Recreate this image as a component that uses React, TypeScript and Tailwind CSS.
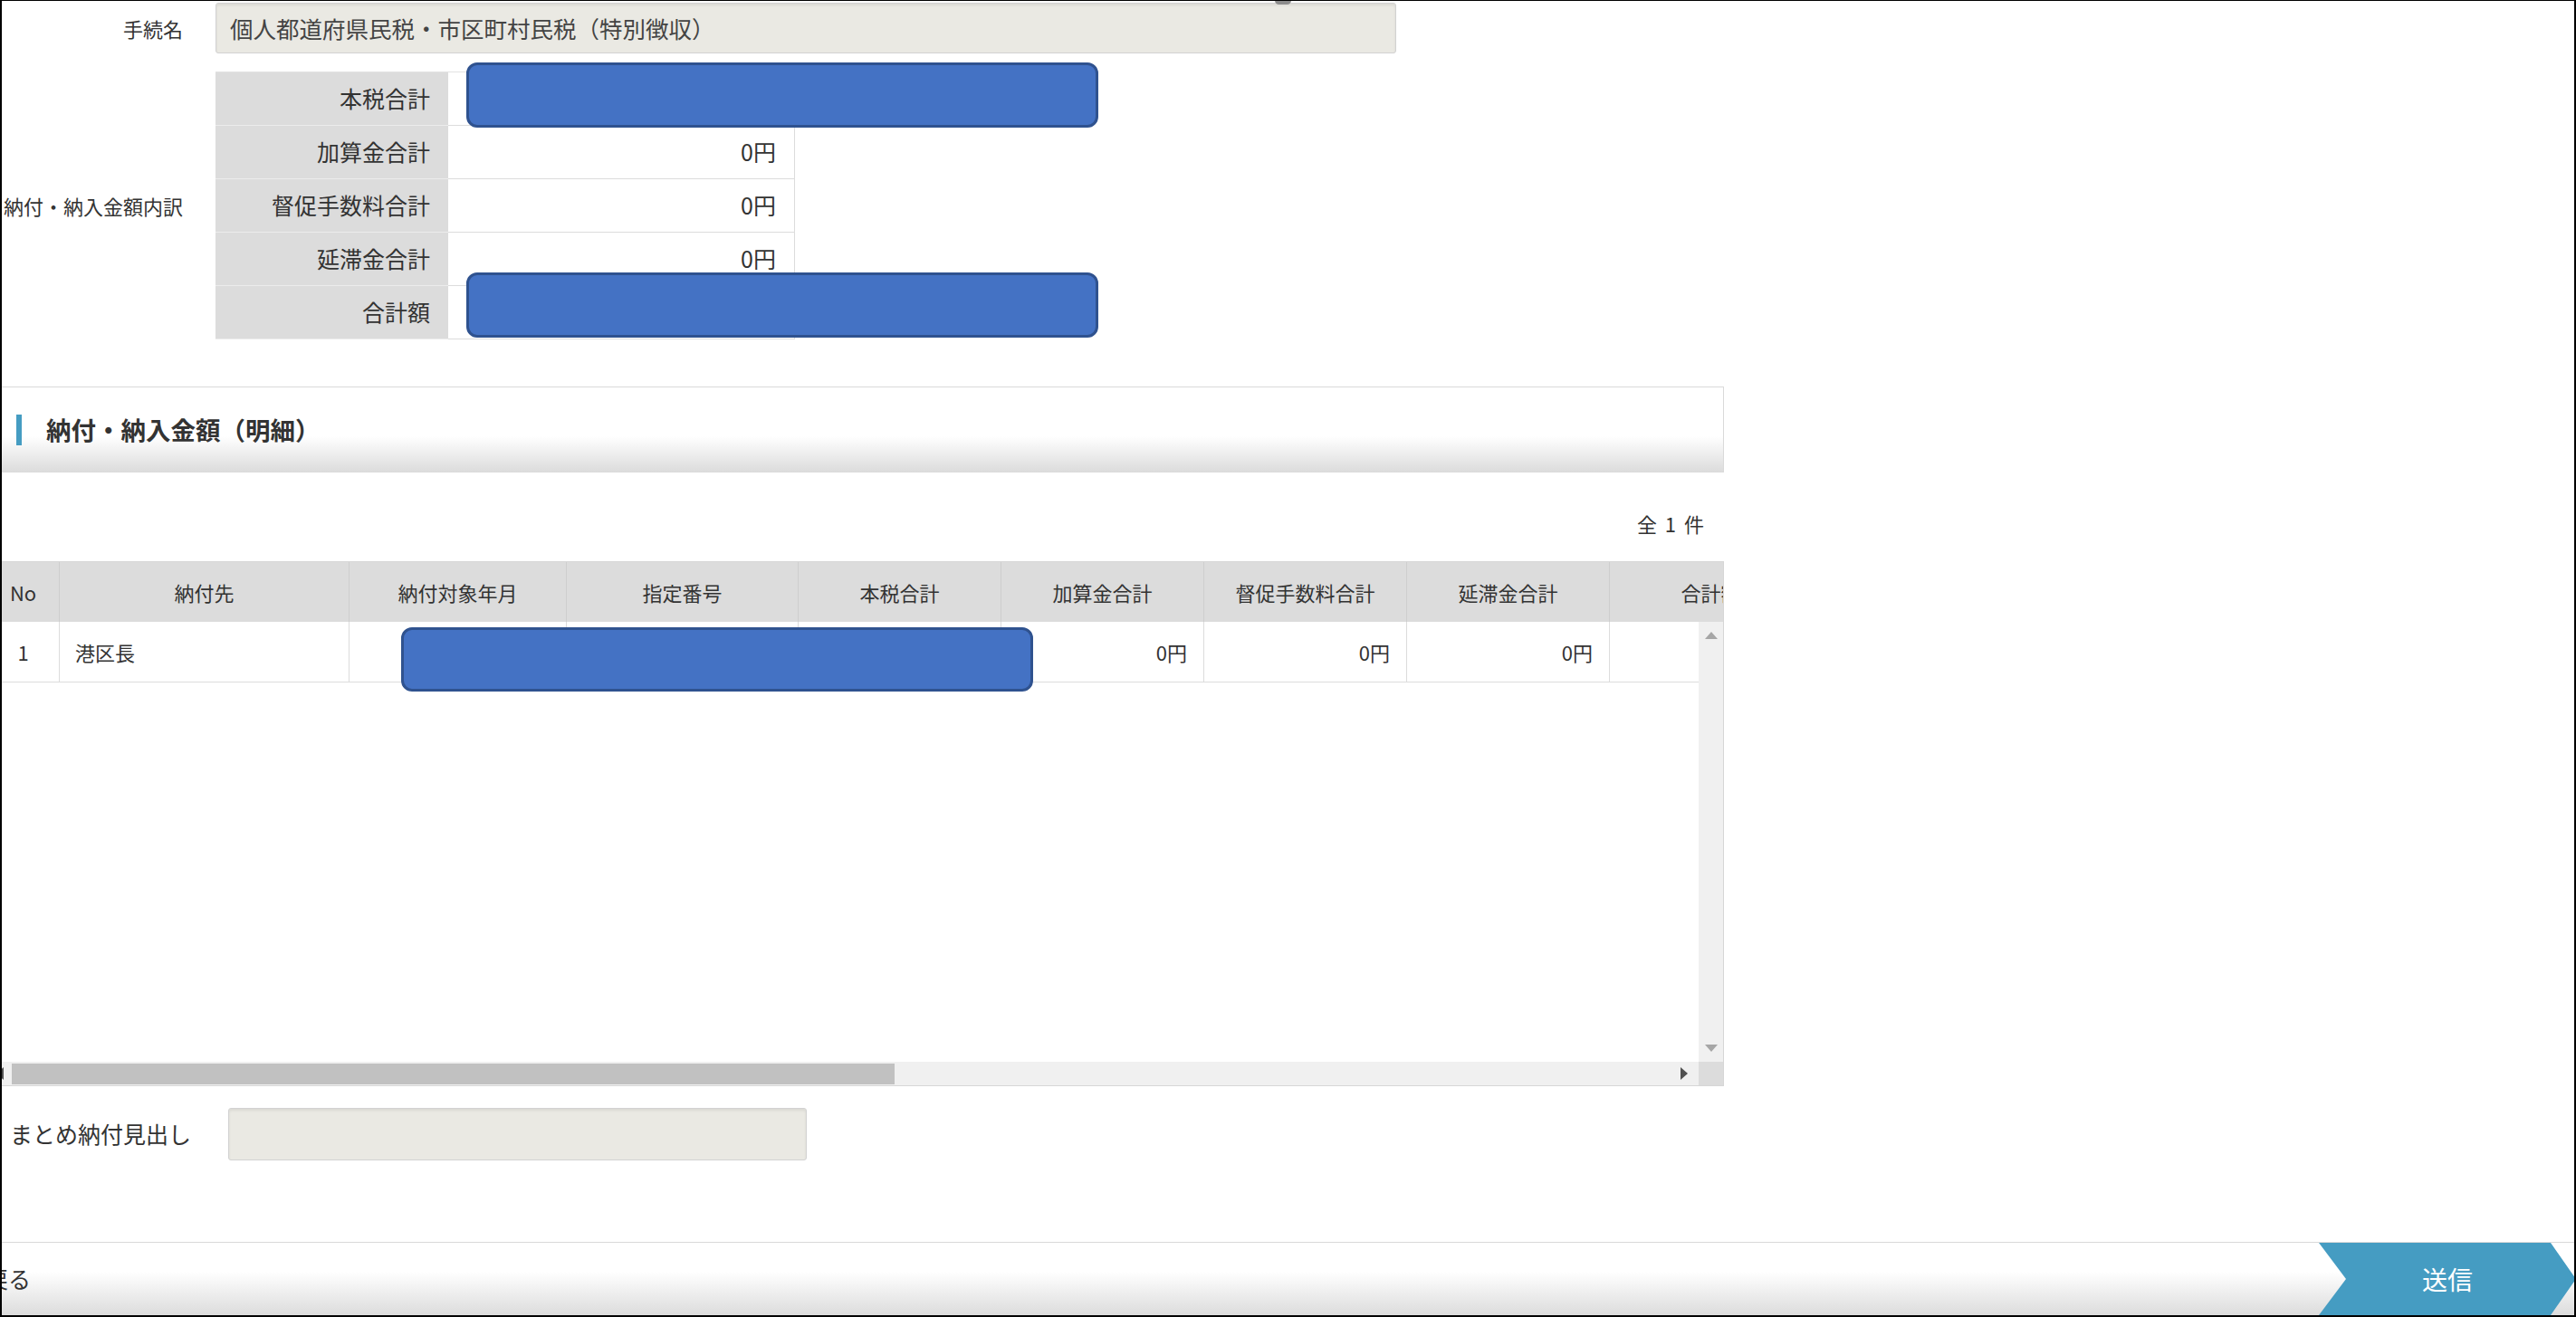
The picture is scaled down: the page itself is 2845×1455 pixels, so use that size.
import React from "react";

const FONT = "font-['Noto_Sans_CJK_JP','Noto_Sans',sans-serif]";

// summary rows of the breakdown table
const breakdown = [
  { label: "本税合計", value: "" },
  { label: "加算金合計", value: "0円" },
  { label: "督促手数料合計", value: "0円" },
  { label: "延滞金合計", value: "0円" },
  { label: "合計額", value: "" },
];

type Col = { label: string; w: string; align: string; value: string };

const columns: Col[] = [
  { label: "No", w: "w-[80px]", align: "justify-center", value: "1" },
  { label: "納付先", w: "w-[320px]", align: "justify-start pl-[17px]", value: "港区長" },
  { label: "納付対象年月", w: "w-[240px]", align: "justify-end pr-[18px]", value: "" },
  { label: "指定番号", w: "w-[256px]", align: "justify-end pr-[18px]", value: "" },
  { label: "本税合計", w: "w-[224px]", align: "justify-end pr-[18px]", value: "" },
  { label: "加算金合計", w: "w-[224px]", align: "justify-end pr-[18px]", value: "0円" },
  { label: "督促手数料合計", w: "w-[224px]", align: "justify-end pr-[18px]", value: "0円" },
  { label: "延滞金合計", w: "w-[224px]", align: "justify-end pr-[18px]", value: "0円" },
  { label: "合計額", w: "w-[224px]", align: "justify-end pr-[18px]", value: "" },
];

function Masked({ className }: { className: string }) {
  return (
    <div
      className={`absolute bg-[#4472c4] border-[3px] border-[#2f528f] rounded-[12px] ${className}`}
    />
  );
}

function Arrow({ dir }: { dir: "up" | "down" | "left" | "right" }) {
  if (dir === "up")
    return (
      <svg width="14" height="8" viewBox="0 0 14 8">
        <polygon points="0,8 14,8 7,0" fill="#a6a6a6" />
      </svg>
    );
  if (dir === "down")
    return (
      <svg width="14" height="8" viewBox="0 0 14 8">
        <polygon points="0,0 14,0 7,8" fill="#a6a6a6" />
      </svg>
    );
  if (dir === "left")
    return (
      <svg width="8" height="14" viewBox="0 0 8 14">
        <polygon points="8,0 8,14 0,7" fill="#505050" />
      </svg>
    );
  return (
    <svg width="8" height="14" viewBox="0 0 8 14">
      <polygon points="0,0 0,14 8,7" fill="#505050" />
    </svg>
  );
}

export default function App() {
  return (
    <div
      className={`relative w-[2845px] h-[1455px] overflow-hidden bg-white border-t border-x-2 border-b-2 border-black text-[#333] ${FONT}`}
    >
      <div className="absolute left-[1406px] top-[-5px] w-[18px] h-[9px] rounded-full bg-[#8c8c8c]" />

      <div className="flex flex-col h-full">
        {/* 手続名 */}
        <div className="flex items-center mt-[2px]">
          <div className="w-[200px] text-right text-[22px]">手続名</div>
          <div className="ml-[36px] w-[1304px] h-[56px] flex items-center pl-[15px] bg-[#eae9e3] border border-[#d2d2d2] rounded-[3px] shadow-[inset_0_2px_3px_rgba(0,0,0,0.07)] text-[25.5px] text-[#444]">
            個人都道府県民税・市区町村民税（特別徴収）
          </div>
        </div>

        {/* 内訳テーブル */}
        <div className="flex items-center mt-[20px]">
          <div className="w-[200px] text-right text-[22px] whitespace-nowrap">納付・納入金額内訳</div>
          <div className="ml-[36px] relative w-[640px] border-t border-[#e2e2e2]">
            {breakdown.map((r) => (
              <div key={r.label} className="flex h-[59px] text-[25px]">
                <div className="w-[257px] flex items-center justify-end pr-[20px] bg-[#dcdcdc] border-b border-[#ececec]">
                  {r.label}
                </div>
                <div className="w-[383px] flex items-center justify-end pr-[20px] border-b border-r border-[#dcdcdc]">
                  {r.value}
                </div>
              </div>
            ))}
            <Masked className="left-[277px] top-[-11px] w-[698px] h-[72px]" />
            <Masked className="left-[277px] top-[221px] w-[698px] h-[72px]" />
          </div>
        </div>

        {/* 見出し */}
        <div className="mt-[52px] w-[1902px] h-[95px] flex items-center pl-[16px] border-y border-r border-[#dadada] bg-[linear-gradient(to_bottom,#ffffff_58%,#dcdcdc_100%)]">
          <div className="w-[6px] h-[34px] bg-[#459cc2]" />
          <div className="ml-[27px] text-[27.5px] font-bold">納付・納入金額（明細）</div>
        </div>

        <div className="w-[1902px] h-[98px] flex justify-end pr-[20px] pt-[41px]">
          <div className="text-[22px] leading-[30px] h-[30px] tracking-[2px]">全 1 件</div>
        </div>

        {/* 明細グリッド */}
        <div className="relative -ml-[16px] w-[1918px] h-[580px] flex flex-col border-r border-b border-[#d6d6d6]">
          <div className="flex h-[67px] shrink-0 overflow-hidden bg-[#dcdcdc] border-t border-[#d6d6d6]">
            {columns.map((c) => (
              <div
                key={c.label}
                className={`${c.w} shrink-0 flex items-center justify-center border-r border-[#cecece] text-[22px] whitespace-nowrap`}
              >
                {c.label}
              </div>
            ))}
          </div>

          <div className="flex h-[486px] shrink-0">
            <div className="flex-1 overflow-hidden bg-white">
              <div className="flex h-[67px] border-b border-[#dcdcdc]">
                {columns.map((c) => (
                  <div
                    key={c.label}
                    className={`${c.w} ${c.align} shrink-0 flex items-center border-r border-[#dcdcdc] text-[22px] whitespace-nowrap`}
                  >
                    {c.value}
                  </div>
                ))}
              </div>
            </div>
            <div className="w-[27px] bg-[#f0f0f0] flex flex-col justify-between items-center pt-[11px] pb-[11px]">
              <Arrow dir="up" />
              <Arrow dir="down" />
            </div>
          </div>

          <div className="flex h-[26px] shrink-0">
            <div className="flex-1 flex items-center bg-[#f0f0f0] pl-[10px] pr-[12px]">
              <Arrow dir="left" />
              <div className="ml-[9px] w-[975px] h-[23px] bg-[#c1c1c1]" />
              <div className="ml-auto">
                <Arrow dir="right" />
              </div>
            </div>
            <div className="w-[27px] bg-[#dcdcdc]" />
          </div>

          <Masked className="left-[457px] top-[73px] w-[698px] h-[71px]" />
        </div>

        {/* まとめ納付見出し */}
        <div className="flex items-center mt-[24px]">
          <div className="w-[214px] pl-[9px] text-[25px] whitespace-nowrap">まとめ納付見出し</div>
          <div className="ml-[36px] w-[639px] h-[58px] bg-[#eae9e3] border border-[#d2d2d2] rounded-[3px] shadow-[inset_0_2px_3px_rgba(0,0,0,0.07)]" />
        </div>

        {/* フッター */}
        <div className="mt-auto h-[81px] shrink-0 flex items-stretch justify-between border-t border-[#d9d9d9] bg-[linear-gradient(to_bottom,#ffffff_40%,#dcdcdc_100%)]">
          <div className="-ml-[18px] flex items-center text-[25px] whitespace-nowrap">戻る</div>
          <div className="-mr-[2px] w-[284px] flex items-center justify-center bg-[#459cc2] text-white text-[28px] [clip-path:polygon(0_0,256px_0,284px_50%,256px_100%,0_100%,30px_50%)]">
            送信
          </div>
        </div>
      </div>
    </div>
  );
}
